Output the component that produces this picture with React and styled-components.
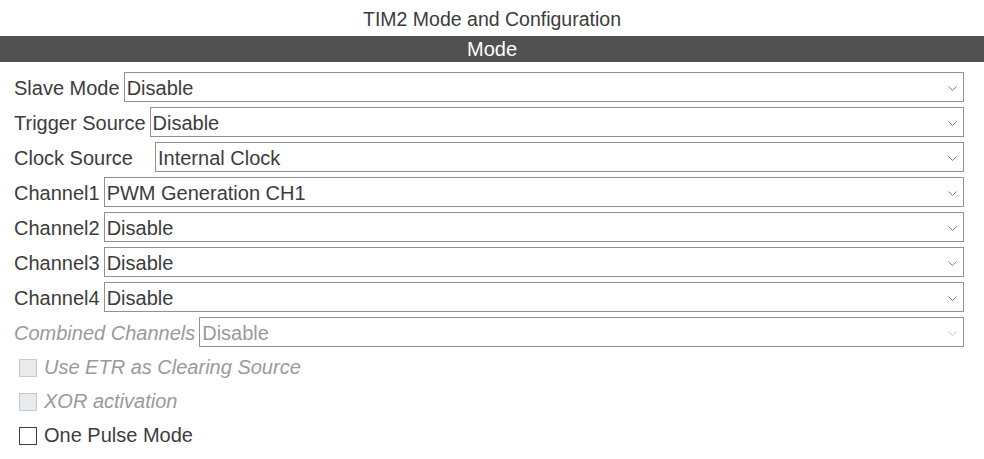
import React from 'react';
import styled, { createGlobalStyle } from 'styled-components';

const GlobalStyle = createGlobalStyle`
  html, body {
    margin: 0;
    padding: 0;
    background: #fff;
  }
  body {
    font-family: "Liberation Sans", Arial, sans-serif;
    color: #3c3c3c;
  }
`;

const Page = styled.div`
  width: 984px;
  height: 459px;
  overflow: hidden;
`;

const Title = styled.div`
  height: 36px;
  line-height: 38px;
  text-align: center;
  font-size: 19.5px;
  color: #3c3c3c;
`;

const SectionBar = styled.div`
  height: 26px;
  line-height: 27px;
  background: #505150;
  color: #fff;
  text-align: center;
  font-size: 20px;
`;

const Form = styled.div`
  display: flex;
  flex-direction: column;
  gap: 5px;
  padding: 10px 20px 0 14px;
`;

const Row = styled.div`
  display: flex;
  align-items: center;
  height: 30px;
`;

const Label = styled.label`
  flex: none;
  width: ${p => (p.$width ? `${p.$width}px` : 'auto')};
  margin-right: 4px;
  padding-top: 2px;
  font-size: 20px;
  font-style: ${p => (p.$disabled ? 'italic' : 'normal')};
  color: ${p => (p.$disabled ? '#9a9a9a' : '#3c3c3c')};
  white-space: nowrap;
`;

const Select = styled.div`
  flex: 1;
  height: 30px;
  box-sizing: border-box;
  border: 1px solid #8e9296;
  display: flex;
  align-items: center;
  justify-content: space-between;
  padding: 2px 6px 0 2px;
  font-size: 20px;
  color: ${p => (p.$disabled ? '#9a9a9a' : '#3c3c3c')};
  background: #fff;
`;

const Chevron = ({ disabled }) => (
  <svg width="9" height="5" viewBox="0 0 9 5">
    <path d="M0.5 0.5 L4.5 4.5 L8.5 0.5" fill="none" stroke={disabled ? '#c8c8c8' : '#7a7a7a'} strokeWidth="1" />
  </svg>
);

const CheckRow = styled.div`
  display: flex;
  align-items: center;
  height: 29px;
  padding-left: 5px;
  gap: 7px;
  font-size: 20px;
  font-style: ${p => (p.$disabled ? 'italic' : 'normal')};
  color: ${p => (p.$disabled ? '#9a9a9a' : '#3c3c3c')};
`;

const Box = styled.span`
  width: 18px;
  height: 18px;
  box-sizing: border-box;
  border: 1px solid ${p => (p.$disabled ? '#c4c8cc' : '#3a3a3a')};
  background: ${p => (p.$disabled ? '#e8ebee' : '#fff')};
`;

const Checks = styled.div`
  display: flex;
  flex-direction: column;
  gap: 5px;
  margin-top: 1px;
`;

const rows = [
  { label: 'Slave Mode', value: 'Disable' },
  { label: 'Trigger Source', value: 'Disable' },
  { label: 'Clock Source', value: 'Internal Clock', width: 137 },
  { label: 'Channel1', value: 'PWM Generation CH1' },
  { label: 'Channel2', value: 'Disable' },
  { label: 'Channel3', value: 'Disable' },
  { label: 'Channel4', value: 'Disable' },
  { label: 'Combined Channels', value: 'Disable', disabled: true },
];

const checks = [
  { label: 'Use ETR as Clearing Source', disabled: true },
  { label: 'XOR activation', disabled: true },
  { label: 'One Pulse Mode' },
];

export default function App() {
  return (
    <Page>
      <GlobalStyle />
      <Title>TIM2 Mode and Configuration</Title>
      <SectionBar>Mode</SectionBar>
      <Form>
        {rows.map(r => (
          <Row key={r.label}>
            <Label $width={r.width} $disabled={r.disabled}>{r.label}</Label>
            <Select $disabled={r.disabled}>
              <span>{r.value}</span>
              <Chevron disabled={r.disabled} />
            </Select>
          </Row>
        ))}
        <Checks>
          {checks.map(c => (
            <CheckRow key={c.label} $disabled={c.disabled}>
              <Box $disabled={c.disabled} />
              <span>{c.label}</span>
            </CheckRow>
          ))}
        </Checks>
      </Form>
    </Page>
  );
}
